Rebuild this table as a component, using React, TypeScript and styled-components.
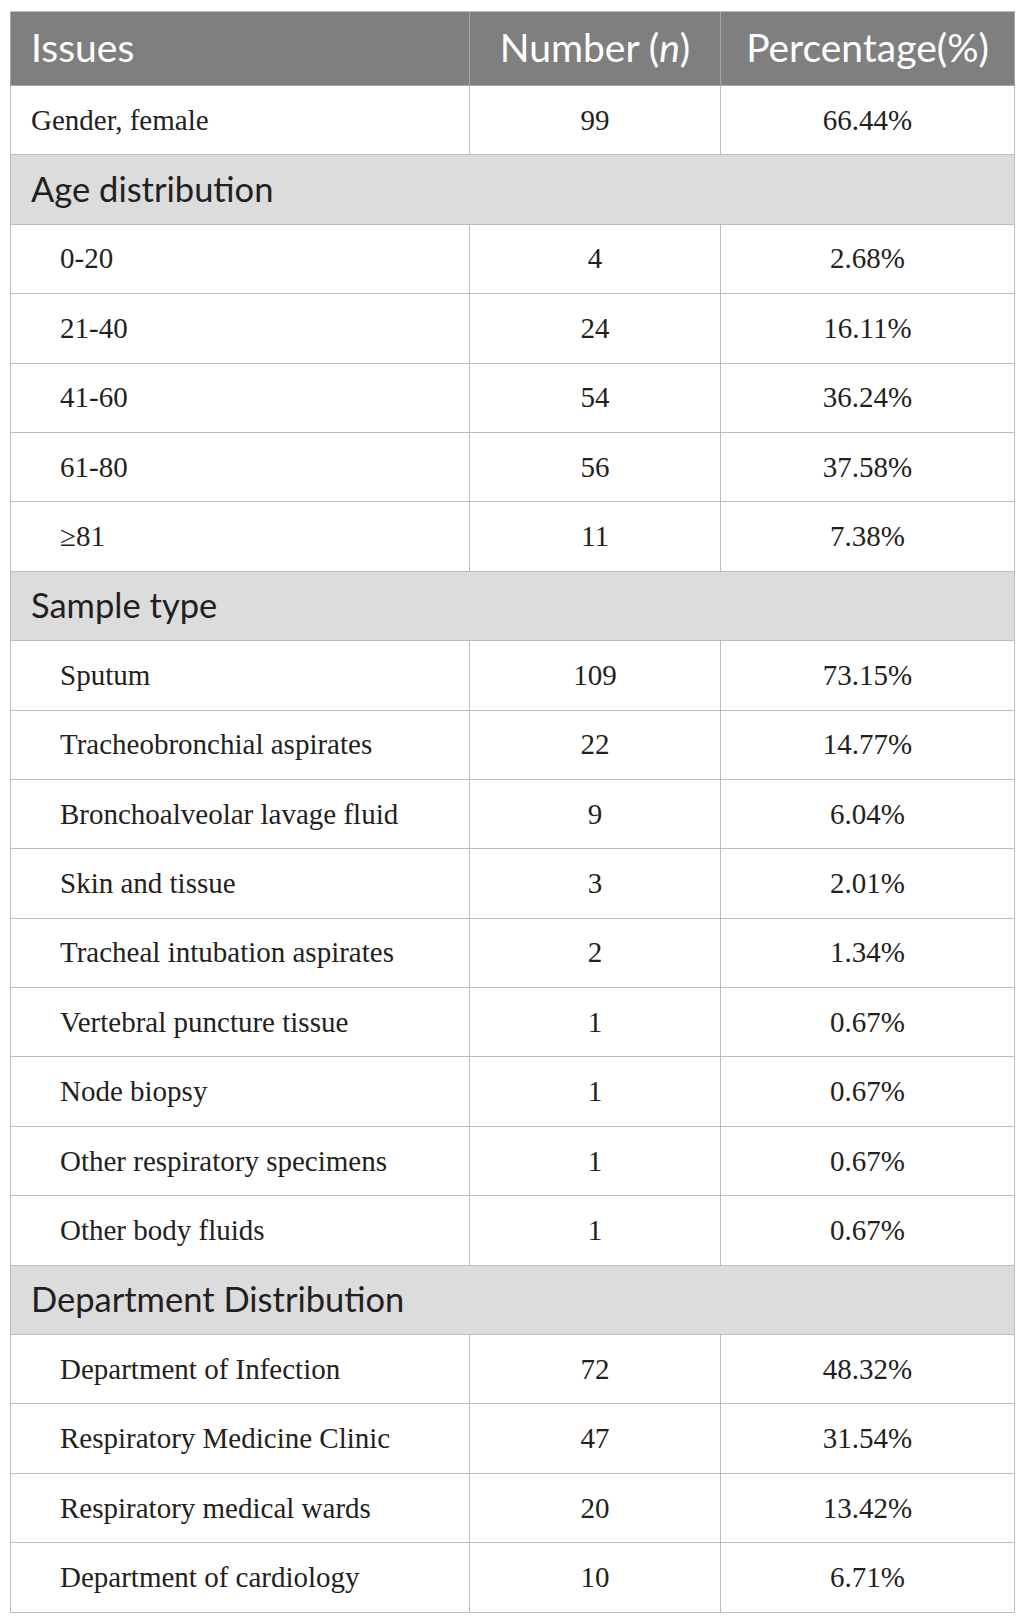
/* eslint-disable */
import styled, { createGlobalStyle } from "styled-components";

const GlobalStyle = createGlobalStyle`
    html, body {
        margin: 0;
        padding: 0;
        background: #ffffff;
    }
`;

type Row =
    | { kind: "section"; label: string }
    | { kind: "item"; label: string; n: string; pct: string; indent?: boolean };

const rows: Row[] = [
    { kind: "item", label: "Gender, female", n: "99", pct: "66.44%" },
    { kind: "section", label: "Age distribution" },
    { kind: "item", label: "0-20", n: "4", pct: "2.68%", indent: true },
    { kind: "item", label: "21-40", n: "24", pct: "16.11%", indent: true },
    { kind: "item", label: "41-60", n: "54", pct: "36.24%", indent: true },
    { kind: "item", label: "61-80", n: "56", pct: "37.58%", indent: true },
    { kind: "item", label: "≥81", n: "11", pct: "7.38%", indent: true },
    { kind: "section", label: "Sample type" },
    { kind: "item", label: "Sputum", n: "109", pct: "73.15%", indent: true },
    { kind: "item", label: "Tracheobronchial aspirates", n: "22", pct: "14.77%", indent: true },
    { kind: "item", label: "Bronchoalveolar lavage fluid", n: "9", pct: "6.04%", indent: true },
    { kind: "item", label: "Skin and tissue", n: "3", pct: "2.01%", indent: true },
    { kind: "item", label: "Tracheal intubation aspirates", n: "2", pct: "1.34%", indent: true },
    { kind: "item", label: "Vertebral puncture tissue", n: "1", pct: "0.67%", indent: true },
    { kind: "item", label: "Node biopsy", n: "1", pct: "0.67%", indent: true },
    { kind: "item", label: "Other respiratory specimens", n: "1", pct: "0.67%", indent: true },
    { kind: "item", label: "Other body fluids", n: "1", pct: "0.67%", indent: true },
    { kind: "section", label: "Department Distribution" },
    { kind: "item", label: "Department of Infection", n: "72", pct: "48.32%", indent: true },
    { kind: "item", label: "Respiratory Medicine Clinic", n: "47", pct: "31.54%", indent: true },
    { kind: "item", label: "Respiratory medical wards", n: "20", pct: "13.42%", indent: true },
    { kind: "item", label: "Department of cardiology", n: "10", pct: "6.71%", indent: true },
];

export default function App() {
    return (
        <>
            <GlobalStyle />
            <Page>
                <Table>
                    <colgroup>
                        <col style={{ width: 459 }} />
                        <col style={{ width: 251 }} />
                        <col style={{ width: 294 }} />
                    </colgroup>
                    <thead>
                        <HeadRow>
                            <HeadCell align="left">Issues</HeadCell>
                            <HeadCell>
                                Number (<i>n</i>)
                            </HeadCell>
                            <HeadCell>Percentage(%)</HeadCell>
                        </HeadRow>
                    </thead>
                    <tbody>
                        {rows.map((row, i) =>
                            row.kind === "section" ? (
                                <BodyRow key={i}>
                                    <SectionCell colSpan={3}>{row.label}</SectionCell>
                                </BodyRow>
                            ) : (
                                <BodyRow key={i}>
                                    <LabelCell $indent={!!row.indent}>{row.label}</LabelCell>
                                    <ValueCell>{row.n}</ValueCell>
                                    <ValueCell>{row.pct}</ValueCell>
                                </BodyRow>
                            )
                        )}
                    </tbody>
                </Table>
            </Page>
        </>
    );
}

const Page = styled.div`
    padding: 11px 0 12px 10px;
`;

const Table = styled.table`
    width: 1004px;
    border-collapse: collapse;
    table-layout: fixed;
    border: 1px solid #bdbdbd;
`;

const HeadRow = styled.tr`
    height: 74px;
    background: #7f7f7f;
`;

const HeadCell = styled.th<{ align?: string }>`
    padding: 0 0 3px ${({ align }) => (align === "left" ? "20px" : "0")};
    text-align: ${({ align }) => align || "center"};
    font-family: "Lato", "Open Sans", sans-serif;
    font-weight: 400;
    font-size: 39px;
    color: #ffffff;
    border: 1px solid #a6a6a6;
    border-top-color: #bdbdbd;

    i {
        font-style: italic;
    }
`;

const BodyRow = styled.tr`
    height: 69.4px;
`;

const SectionCell = styled.td`
    padding: 0 0 2px 20px;
    background: #dcdcdc;
    font-family: "Lato", "Open Sans", sans-serif;
    font-size: 34.5px;
    color: #231f20;
    border: 1px solid #bdbdbd;
`;

const LabelCell = styled.td<{ $indent: boolean }>`
    padding: 0 0 0 ${({ $indent }) => ($indent ? "49px" : "20px")};
    font-family: "Liberation Serif", "Times New Roman", serif;
    font-size: 29px;
    color: #231f20;
    border: 1px solid #bdbdbd;
    white-space: nowrap;
`;

const ValueCell = styled.td`
    padding: 0;
    text-align: center;
    font-family: "Liberation Serif", "Times New Roman", serif;
    font-size: 29px;
    color: #231f20;
    border: 1px solid #bdbdbd;
`;
